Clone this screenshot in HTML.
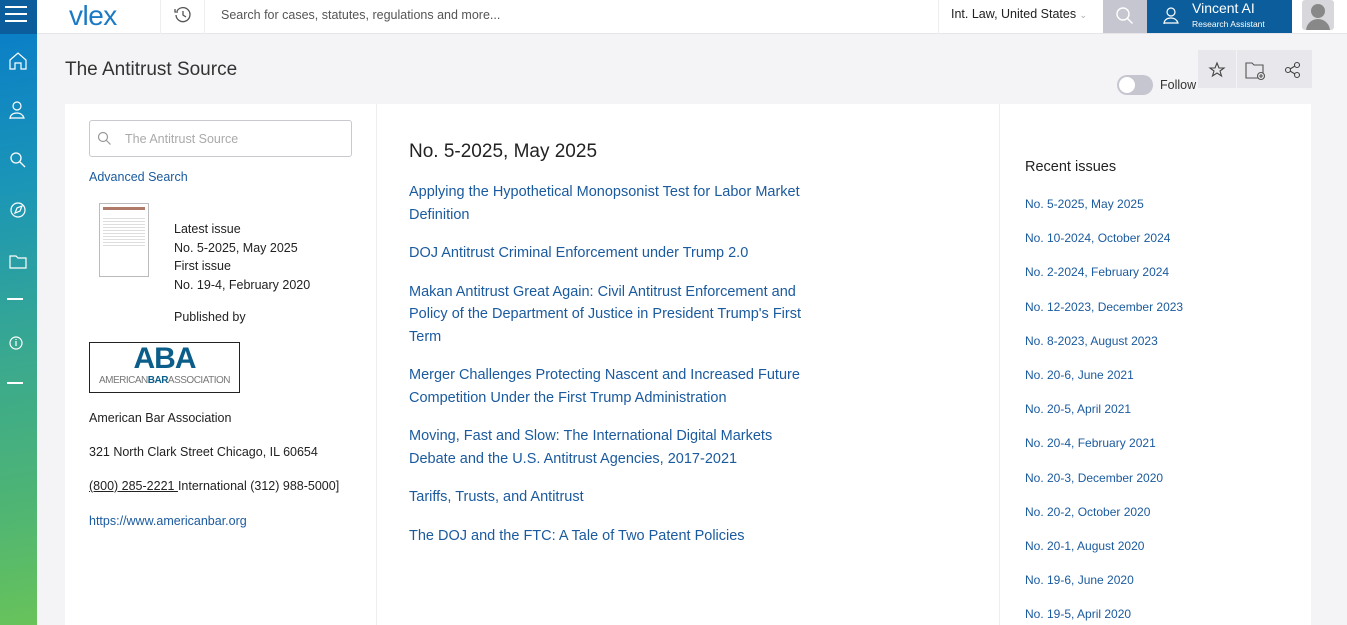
<!DOCTYPE html>
<html style="overflow:hidden;width:1347px;height:625px"><head><meta charset="utf-8"><style>
*{box-sizing:border-box;margin:0;padding:0}
body{width:1347px;height:625px;overflow:hidden;background:#f4f4f6;font-family:"Liberation Sans",sans-serif;color:#222;position:relative}
.top{position:absolute;left:0;top:0;width:1347px;height:34px;background:#fff;border-bottom:1px solid #e6e6ea}
.side{position:absolute;left:0;top:34px;width:37px;height:591px;background:linear-gradient(170deg,#0b7fc6 0%,#1a95b8 25%,#3aa98e 55%,#4fb573 80%,#68c35a 100%)}
.burger{position:absolute;left:0;top:0;width:37px;height:34px;background:#0b5e9b}
.burger i{position:absolute;left:5px;width:22px;height:2px;background:#fff}
a{color:#1a5a9e;text-decoration:none}
.abs{position:absolute;white-space:nowrap}
.ic{position:absolute;left:7px;width:22px;height:22px}
.mid a{display:block;white-space:nowrap}
</style></head><body>
<div class="top">
<div class="burger"><i style="top:6px"></i><i style="top:13px"></i><i style="top:20px"></i></div>
<div class="abs" style="left:69px;top:1px;font-size:28px;line-height:30px;color:#1c7ac4;letter-spacing:-0.5px">vlex</div>
<div class="abs" style="left:160px;top:0;width:1px;height:34px;background:#eee"></div>
<div class="abs" style="left:204px;top:0;width:1px;height:34px;background:#eee"></div>
<svg class="abs" style="left:174px;top:6px" width="18" height="18" viewBox="0 0 18 18" fill="none" stroke="#555" stroke-width="1.3"><path d="M3 5A7 7 0 1 1 2 9"/><path d="M1 3v3h3"/><path d="M9 5v4l3 2"/></svg>
<div class="abs" style="left:221px;top:8px;font-size:12.5px;color:#555">Search for cases, statutes, regulations and more...</div>
<div class="abs" style="left:938px;top:0;width:1px;height:34px;background:#eee"></div>
<div class="abs" style="left:951px;top:7px;font-size:12.5px;color:#222">Int. Law, United States <span style="color:#aaa;font-size:9px">⌄</span></div>
<div class="abs" style="left:1103px;top:0;width:44px;height:33px;background:#c5c6d0"></div>
<svg class="abs" style="left:1115px;top:6px" width="20" height="20" viewBox="0 0 20 20" fill="none" stroke="#fff" stroke-width="1.4"><circle cx="8" cy="8" r="6"/><path d="M12.5 12.5l5 5"/></svg>
<div class="abs" style="left:1147px;top:0;width:145px;height:33px;background:#0b5e9b"></div>
<svg class="abs" style="left:1162px;top:6px" width="20" height="20" viewBox="0 0 20 20" fill="none" stroke="#fff" stroke-width="1.2"><circle cx="9" cy="6" r="4"/><path d="M2 18c0-4 3-6 7-6s6 2 7 5H2"/></svg>
<div class="abs" style="left:1192px;top:0px;font-size:14px;color:#fff">Vincent AI</div>
<div class="abs" style="left:1192px;top:19px;font-size:8.5px;color:#fff">Research Assistant</div>
<div class="abs" style="left:1302px;top:0;width:32px;height:30px;background:#d8d8dc;border-radius:3px;overflow:hidden"><div class="abs" style="left:9px;top:4px;width:14px;height:14px;border-radius:50%;background:#888"></div><div class="abs" style="left:4px;top:19px;width:24px;height:16px;border-radius:12px 12px 0 0;background:#888"></div></div>
</div>
<div class="side">
<svg class="ic" style="top:16px" viewBox="0 0 22 22" fill="none" stroke="#fff" stroke-width="1.2"><path d="M3 10l8-7 8 7v9h-5v-6H8v6H3z"/></svg>
<svg class="ic" style="top:66px" viewBox="0 0 22 22" fill="none" stroke="#fff" stroke-width="1.2"><circle cx="10" cy="6" r="4"/><path d="M3 19c0-4 3-6 7-6s6 2 7 5H3"/></svg>
<svg class="ic" style="top:115px" viewBox="0 0 22 22" fill="none" stroke="#fff" stroke-width="1.3"><circle cx="9" cy="9" r="5"/><path d="M13 13l5 5"/></svg>
<svg class="ic" style="top:165px" viewBox="0 0 22 22" fill="none" stroke="#fff" stroke-width="1.2"><circle cx="11" cy="11" r="7"/><path d="M8 14l2-5 5-2-2 5z"/></svg>
<svg class="ic" style="top:216px" viewBox="0 0 22 22" fill="none" stroke="#fff" stroke-width="1.2"><path d="M3 6h6l2 2h8v10H3z"/></svg>
<div class="abs" style="left:7px;top:264px;width:16px;height:1.5px;background:#fff"></div>
<svg class="ic" style="top:298px" viewBox="0 0 22 22" fill="none" stroke="#fff" stroke-width="1.2"><circle cx="9" cy="11" r="6"/><path d="M9 9v5M9 7v1"/></svg>
<div class="abs" style="left:7px;top:348px;width:16px;height:1.5px;background:#fff"></div>
</div>
<div class="abs" style="left:65px;top:59px;font-size:19px;color:#333">The Antitrust Source</div>
<div class="abs" style="left:1117px;top:75px;width:36px;height:20px;border-radius:10px;background:#c5c6d0"><div class="abs" style="left:2px;top:2px;width:16px;height:16px;border-radius:50%;background:#fff"></div></div>
<div class="abs" style="left:1160px;top:78px;font-size:12.5px;color:#333">Follow</div>
<div class="abs" style="left:1198px;top:50px;width:38px;height:38px;background:#e8e8ec"></div>
<div class="abs" style="left:1237px;top:50px;width:38px;height:38px;background:#e8e8ec"></div>
<div class="abs" style="left:1275px;top:50px;width:37px;height:38px;background:#e8e8ec"></div>
<svg class="abs" style="left:1208px;top:61px" width="18" height="18" viewBox="0 0 18 18" fill="none" stroke="#444" stroke-width="1.1"><path d="M9 2l2 5h5l-4 3 1.5 5L9 12l-4.5 3L6 10 2 7h5z"/></svg>
<svg class="abs" style="left:1245px;top:61px" width="22" height="20" viewBox="0 0 22 20" fill="none" stroke="#555" stroke-width="1.1"><path d="M1 2h6l2 2h9v13H1z"/><circle cx="16" cy="15" r="3.5" fill="#e8e8ec"/><path d="M16 13v4M14 15h4"/></svg>
<svg class="abs" style="left:1284px;top:61px" width="18" height="18" viewBox="0 0 18 18" fill="none" stroke="#444" stroke-width="1.1"><circle cx="4" cy="9" r="2.5"/><circle cx="13" cy="4" r="2.5"/><circle cx="13" cy="14" r="2.5"/><path d="M6 8l5-3M6 10l5 3"/></svg>
<div class="abs" style="left:65px;top:104px;width:1246px;height:521px;background:#fff"></div>
<div class="abs" style="left:376px;top:104px;width:1px;height:521px;background:#eee"></div>
<div class="abs" style="left:999px;top:104px;width:1px;height:521px;background:#eee"></div>
<div class="abs" style="left:89px;top:120px;width:263px;height:37px;border:1px solid #c9c9d0;border-radius:3px"></div>
<svg class="abs" style="left:97px;top:131px" width="15" height="15" viewBox="0 0 15 15" fill="none" stroke="#999" stroke-width="1.2"><circle cx="6" cy="6" r="4.5"/><path d="M9.5 9.5l4 4"/></svg>
<div class="abs" style="left:125px;top:132px;font-size:12.5px;color:#aaa">The Antitrust Source</div>
<div class="abs" style="left:89px;top:170px;font-size:12.5px"><a>Advanced Search</a></div>
<div class="abs" style="left:99px;top:203px;width:50px;height:74px;border:1px solid #bbb;background:#fff"><div style="margin:3px;height:3px;background:#b07a6a"></div><div style="margin:6px 3px;height:30px;background:repeating-linear-gradient(#fff 0 2px,#ddd 2px 3px)"></div></div>
<div class="abs" style="left:174px;top:220px;font-size:12.5px;line-height:18.7px;color:#222">Latest issue<br>No. 5-2025, May 2025<br>First issue<br>No. 19-4, February 2020</div>
<div class="abs" style="left:174px;top:310px;font-size:12.5px;color:#222">Published by</div>
<div class="abs" style="left:89px;top:342px;width:151px;height:51px;border:1px solid #222;background:#fff;text-align:center">
<div style="font-size:30px;font-weight:bold;color:#0b5e8a;line-height:32px;letter-spacing:-1px">ABA</div>
<div style="font-size:10px;color:#777;letter-spacing:-0.5px;white-space:nowrap">AMERICAN<b style="color:#0b5e8a">BAR</b>ASSOCIATION</div></div>
<div class="abs" style="left:89px;top:411px;font-size:12.5px;color:#222">American Bar Association</div>
<div class="abs" style="left:89px;top:445px;font-size:12.5px;color:#222">321 North Clark Street Chicago, IL 60654</div>
<div class="abs" style="left:89px;top:479px;font-size:12.5px;color:#222"><u>(800) 285-2221 </u>International (312) 988-5000]</div>
<div class="abs" style="left:89px;top:514px;font-size:12.5px"><a>https://www.americanbar.org</a></div>
<div class="abs" style="left:409px;top:141px;font-size:19px;color:#222">No. 5-2025, May 2025</div>
<div class="abs mid" style="left:409px;top:181px;font-size:14.5px;line-height:22.5px">
<a style="margin-bottom:16px">Applying the Hypothetical Monopsonist Test for Labor Market<br>Definition</a>
<a style="margin-bottom:16px">DOJ Antitrust Criminal Enforcement under Trump 2.0</a>
<a style="margin-bottom:16px">Makan Antitrust Great Again: Civil Antitrust Enforcement and<br>Policy of the Department of Justice in President Trump's First<br>Term</a>
<a style="margin-bottom:16px">Merger Challenges Protecting Nascent and Increased Future<br>Competition Under the First Trump Administration</a>
<a style="margin-bottom:16px">Moving, Fast and Slow: The International Digital Markets<br>Debate and the U.S. Antitrust Agencies, 2017-2021</a>
<a style="margin-bottom:16px">Tariffs, Trusts, and Antitrust</a>
<a>The DOJ and the FTC: A Tale of Two Patent Policies</a>
</div>
<div class="abs" style="left:1025px;top:159px;font-size:14.5px;color:#222">Recent issues</div>
<div class="abs" style="left:1025px;top:187px;font-size:12px;line-height:34.2px">
<a style="display:block">No. 5-2025, May 2025</a><a style="display:block">No. 10-2024, October 2024</a><a style="display:block">No. 2-2024, February 2024</a><a style="display:block">No. 12-2023, December 2023</a><a style="display:block">No. 8-2023, August 2023</a><a style="display:block">No. 20-6, June 2021</a><a style="display:block">No. 20-5, April 2021</a><a style="display:block">No. 20-4, February 2021</a><a style="display:block">No. 20-3, December 2020</a><a style="display:block">No. 20-2, October 2020</a><a style="display:block">No. 20-1, August 2020</a><a style="display:block">No. 19-6, June 2020</a><a style="display:block">No. 19-5, April 2020</a>
</div>
</body></html>
